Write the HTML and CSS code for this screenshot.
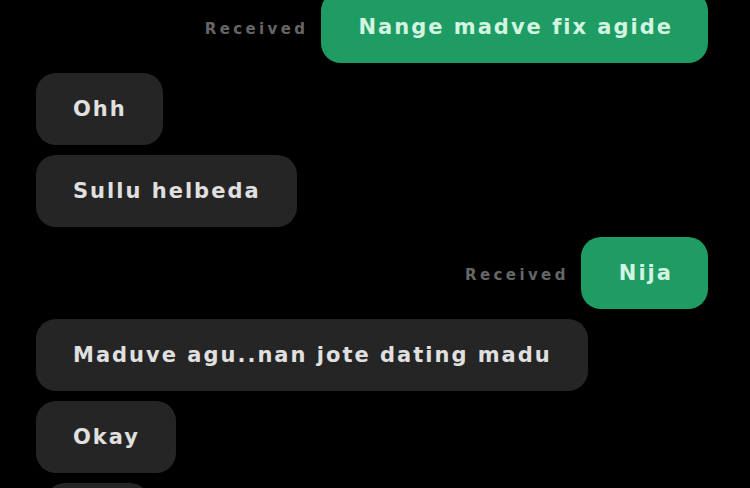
FILE: index.html
```html
<!DOCTYPE html>
<html>
<head>
<meta charset="utf-8">
<link rel="stylesheet" href="styles.css">
</head>
<body>
<div class="chat">
  <div class="row out">
    <span class="status">Received</span>
    <div class="bubble green">Nange madve fix agide</div>
  </div>
  <div class="row in"><div class="bubble dark">Ohh</div></div>
  <div class="row in"><div class="bubble dark">Sullu helbeda</div></div>
  <div class="row out">
    <span class="status">Received</span>
    <div class="bubble green">Nija</div>
  </div>
  <div class="row in"><div class="bubble dark">Maduve agu..nan jote dating madu</div></div>
  <div class="row in"><div class="bubble dark">Okay</div></div>
  <div class="row in"><div class="bubble dark stub">&nbsp;</div></div>
</div>
</body>
</html>
```
FILE: styles.css
```css
html, body {
  margin: 0;
  padding: 0;
  background: #000;
  width: 750px;
  height: 488px;
  overflow: hidden;
}
.chat {
  display: flex;
  flex-direction: column;
  gap: 10px;
  padding: 0 42px 0 36px;
  margin-top: -9px;
  font-family: "DejaVu Sans", "Liberation Sans", sans-serif;
}
.row {
  display: flex;
  align-items: center;
}
.row.out {
  justify-content: flex-end;
  gap: 12px;
}
.bubble {
  height: 72px;
  box-sizing: border-box;
  display: flex;
  align-items: center;
  padding: 0 36px 0 37px;
  border-radius: 20px;
  font-size: 21px;
  font-weight: bold;
  letter-spacing: 2px;
  white-space: nowrap;
}
.green {
  background: #1e9c64;
  color: #d4f4e2;
  padding: 0 35px 0 38px;
}
.dark {
  background: #252525;
  color: #e0e0e0;
}
.stub {
  width: 105px;
  margin-left: 9px;
}
.status {
  color: #666;
  font-size: 15px;
  font-weight: bold;
  letter-spacing: 3.4px;
  padding-top: 4px;
}
```
